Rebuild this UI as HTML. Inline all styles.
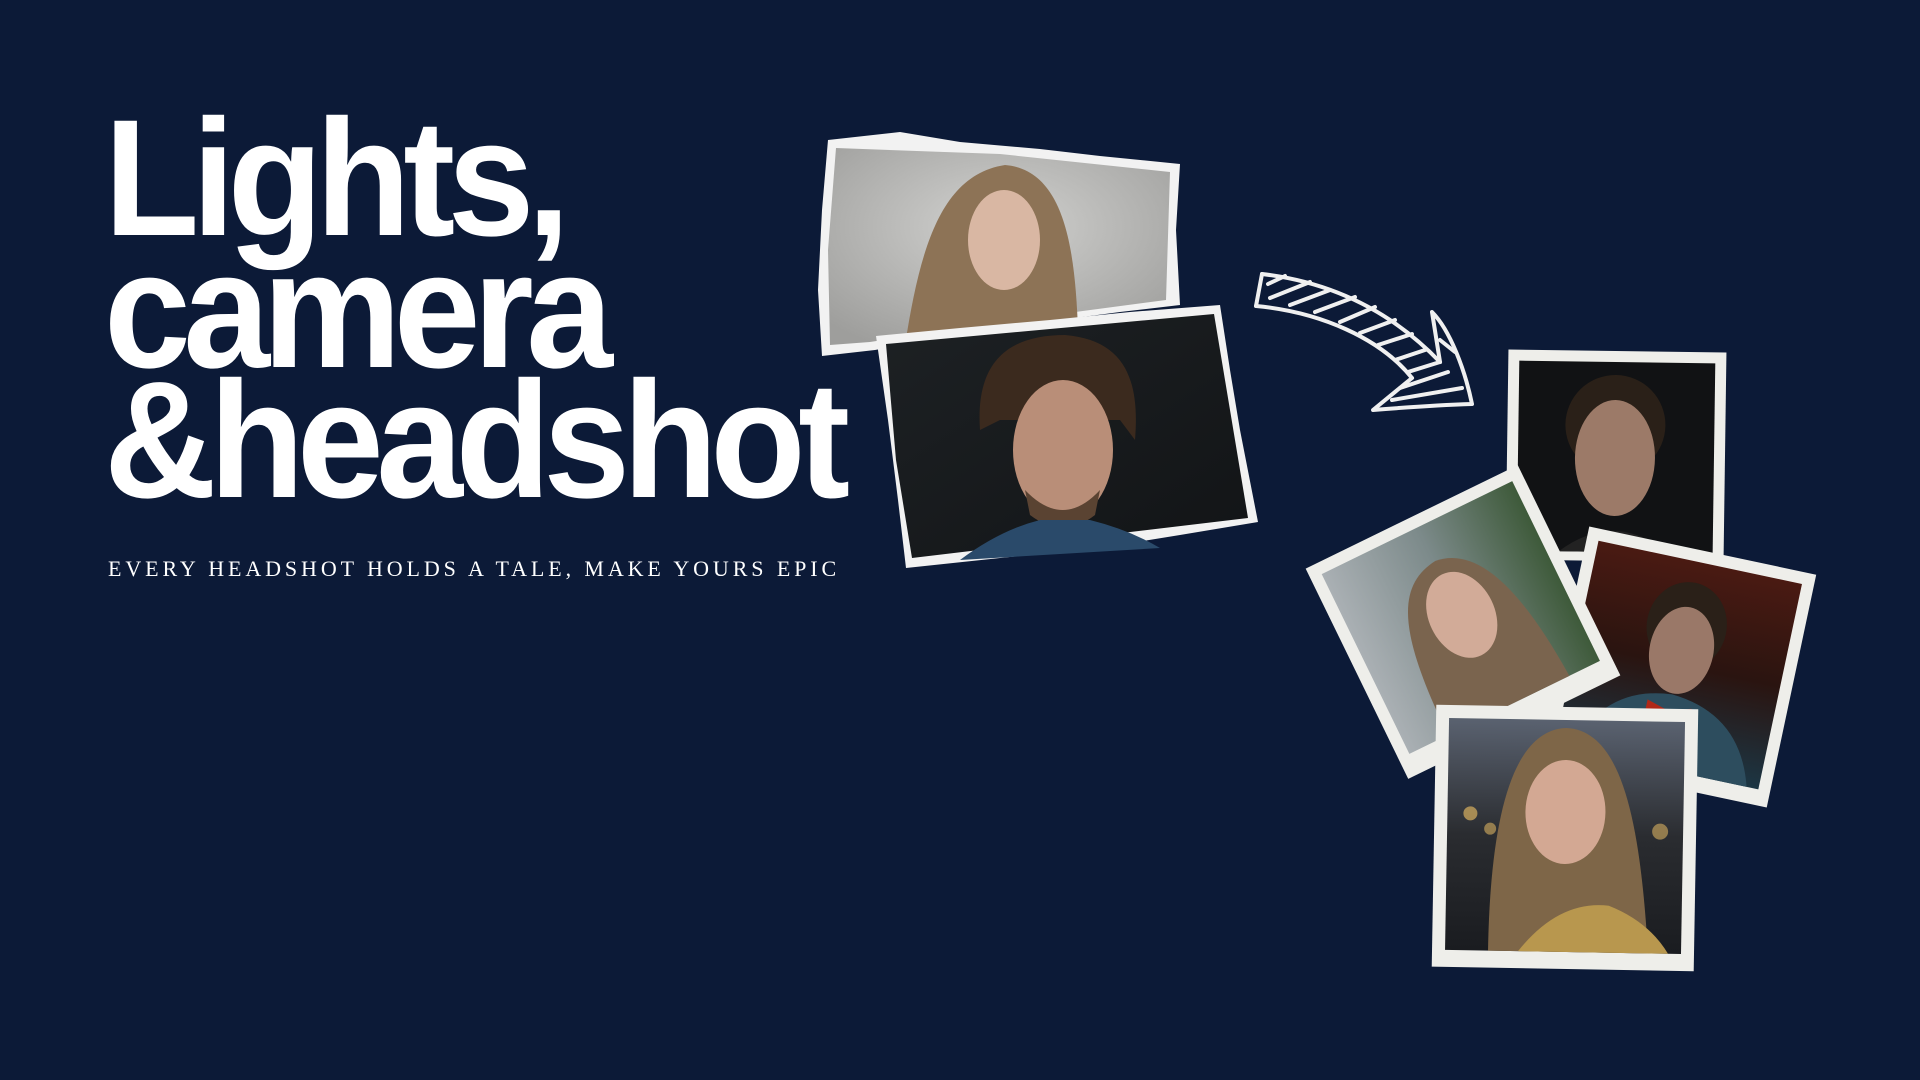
<!DOCTYPE html>
<html><head><meta charset="utf-8"><style>
html,body{margin:0;padding:0;width:1920px;height:1080px;overflow:hidden;background:#0c1a37;}
.t{position:absolute;left:104px;color:#fff;font-family:"Liberation Sans",sans-serif;font-weight:bold;font-size:166px;letter-spacing:-8px;line-height:1;white-space:nowrap;transform-origin:left top;transform:scaleX(0.94);}
.sub{position:absolute;left:108px;top:556px;color:#fff;font-family:"Liberation Serif",serif;font-size:22px;letter-spacing:3.9px;white-space:nowrap;}
svg{position:absolute;left:0;top:0;}
</style></head><body>
<div class="t" style="top:96px">Lights,</div>
<div class="t" style="top:228px">camera</div>
<div class="t" style="top:358px">&amp;headshot</div>
<div class="sub">EVERY HEADSHOT HOLDS A TALE, MAKE YOURS EPIC</div>
<svg width="1920" height="1080" viewBox="0 0 1920 1080">
<defs>
<radialGradient id="g1" cx="0.5" cy="0.4" r="0.7"><stop offset="0" stop-color="#d2d2d0"/><stop offset="1" stop-color="#9e9e9c"/></radialGradient>
<linearGradient id="g2" x1="0" y1="0" x2="1" y2="1"><stop offset="0" stop-color="#1d2124"/><stop offset="1" stop-color="#121416"/></linearGradient>
<linearGradient id="g3" x1="0" y1="0" x2="1" y2="0"><stop offset="0" stop-color="#aab0b4"/><stop offset="0.5" stop-color="#7c8a8a"/><stop offset="1" stop-color="#3e5a3a"/></linearGradient>
<linearGradient id="g4" x1="0" y1="0" x2="0" y2="1"><stop offset="0" stop-color="#4a1a12"/><stop offset="0.5" stop-color="#2a1410"/><stop offset="1" stop-color="#1c3644"/></linearGradient>
<linearGradient id="g5" x1="0" y1="0" x2="0" y2="1"><stop offset="0" stop-color="#5a6270"/><stop offset="0.5" stop-color="#2a2c30"/><stop offset="1" stop-color="#1a1c20"/></linearGradient>
</defs>
<polygon points="828,140 900,132 960,142 1040,149 1100,156 1180,164 1176,230 1180,305 1120,312 1060,320 990,330 930,340 875,350 822,356 818,290 822,210" fill="#f2f2f2"/>
<polygon points="836,148 1000,154 1170,172 1166,300 1000,322 870,342 830,345 828,250" fill="url(#g1)"/>
<path d="M905,345 C920,250 940,175 1005,165 C1065,170 1075,250 1078,330 L990,340Z" fill="#8d7356"/>
<ellipse cx="1004" cy="240" rx="36" ry="50" fill="#d9b7a3"/>
<polygon points="876,336 960,328 1050,320 1130,312 1220,305 1230,370 1240,430 1258,522 1180,535 1100,548 1000,558 906,568 898,500 888,420" fill="#f2f2f2"/>
<polygon points="886,344 1214,314 1248,518 912,558 896,460" fill="url(#g2)"/>
<path d="M980,430 C975,360 1010,335 1065,335 C1125,340 1140,380 1135,440 L1120,420 L1000,420Z" fill="#3b2a1e"/>
<ellipse cx="1063" cy="450" rx="50" ry="70" fill="#b98e78"/>
<path d="M1025,490 Q1063,530 1100,490 L1095,515 Q1063,540 1030,515Z" fill="#5a4332"/>
<path d="M960,560 Q1000,530 1040,520 L1090,520 Q1130,530 1160,548Z" fill="#2a4a6a"/>
<g fill="none" stroke="#f0f0f0" stroke-width="4" stroke-linecap="round" stroke-linejoin="round">
<path d="M1262,274 C1330,282 1390,310 1440,362"/>
<path d="M1256,306 C1320,312 1380,338 1412,378"/>
<path d="M1262,274 L1256,306"/>
<path d="M1440,362 L1432,312 C1450,330 1465,370 1472,404 C1440,405 1410,407 1373,410 L1412,378"/>
<path d="M1268,284 L1285,276 M1270,298 L1310,282 M1290,305 L1330,290 M1315,312 L1355,297 M1340,322 L1375,307 M1360,333 L1395,320 M1378,345 L1412,334 M1395,360 L1425,350 M1408,372 L1440,362 M1400,388 L1448,372 M1392,400 L1462,388 M1440,340 L1455,352"/>
</g>
<g transform="rotate(0.8 1616 455)">
<rect x="1507" y="351" width="218" height="210" fill="#eeeeea"/>
<rect x="1518" y="362" width="196" height="190" fill="#111214"/>
<ellipse cx="1615" cy="425" rx="50" ry="50" fill="#2a2018"/>
<ellipse cx="1615" cy="458" rx="40" ry="58" fill="#9c7a68"/>
<path d="M1560,552 Q1615,510 1670,552Z" fill="#222"/>
</g>
<g transform="rotate(12 1678 667)">
<rect x="1562" y="548" width="232" height="238" fill="#eeeeea"/>
<rect x="1574" y="560" width="208" height="210" fill="url(#g4)"/>
<ellipse cx="1678" cy="625" rx="40" ry="44" fill="#2a2018"/>
<ellipse cx="1678" cy="650" rx="32" ry="44" fill="#9a7868"/>
<path d="M1590,770 Q1610,700 1678,695 Q1750,700 1770,770Z" fill="#2d4d5e"/>
<path d="M1655,705 L1678,712 L1700,705 L1700,722 L1678,715 L1655,722Z" fill="#b02818"/>
</g>
<g transform="rotate(-26 1463 622)">
<rect x="1345" y="505" width="236" height="234" fill="#eeeeea"/>
<rect x="1357" y="517" width="212" height="200" fill="url(#g3)"/>
<path d="M1400,717 C1400,600 1420,560 1465,555 C1510,560 1530,620 1535,717Z" fill="#7a644e"/>
<ellipse cx="1465" cy="615" rx="33" ry="45" fill="#d2ab98"/>
</g>
<g transform="rotate(1 1566 838)">
<rect x="1434" y="707" width="262" height="262" fill="#eeeeea"/>
<rect x="1447" y="720" width="236" height="232" fill="url(#g5)"/>
<circle cx="1470" cy="815" r="7" fill="#d8b060" opacity=".7"/><circle cx="1490" cy="830" r="6" fill="#d8b060" opacity=".6"/><circle cx="1660" cy="830" r="8" fill="#d8b060" opacity=".6"/>
<path d="M1490,952 C1490,820 1510,730 1565,728 C1620,730 1640,820 1650,952Z" fill="#7e6648"/>
<ellipse cx="1565" cy="812" rx="40" ry="52" fill="#d3a893"/>
<path d="M1520,952 Q1560,900 1610,905 Q1650,920 1670,952Z" fill="#b8974e"/>
</g>
</svg>
</body></html>
